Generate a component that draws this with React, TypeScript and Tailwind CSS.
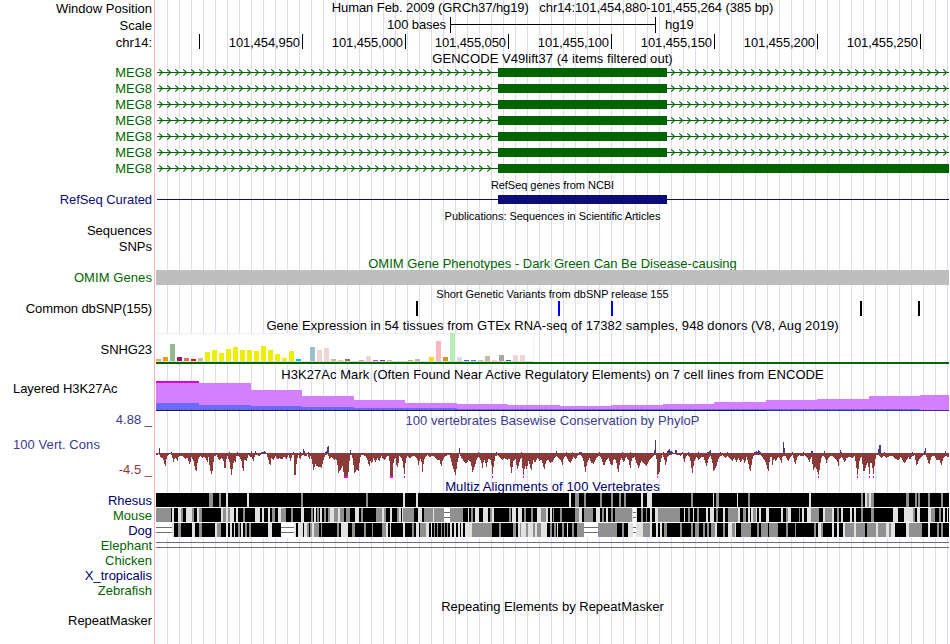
import React from "react";

/* ---------- shared row scaffolding ---------- */

const LABEL = "w-[154px] shrink-0 pr-[2px] text-right text-[13px] leading-[16px] whitespace-pre";

function Row({
  height,
  label = "",
  labelClass = "",
  children,
}: {
  height: string;
  label?: React.ReactNode;
  labelClass?: string;
  children?: React.ReactNode;
}) {
  return (
    <div className={`flex w-full shrink-0 ${height}`}>
      <div className={`${LABEL} ${labelClass}`}>{label}</div>
      <div className="ml-[2px] w-[793px] shrink-0">{children}</div>
    </div>
  );
}

function Title({
  height,
  className = "",
  small = false,
  label,
  labelClass,
  children,
}: {
  height: string;
  className?: string;
  small?: boolean;
  label?: React.ReactNode;
  labelClass?: string;
  children: React.ReactNode;
}) {
  return (
    <Row height={height} label={label} labelClass={labelClass}>
      <div
        className={`text-center leading-[16px] whitespace-pre ${small ? "text-[11px]" : "text-[13px]"} ${className}`}
      >
        {children}
      </div>
    </Row>
  );
}

/* Drawing surface for a track: x units are window pixels, starting at 156. */
function Canvas({ h, children }: { h: number; children: React.ReactNode }) {
  return (
    <svg
      className="block"
      width={793}
      height={h}
      viewBox={`156 0 793 ${h}`}
      shapeRendering="crispEdges"
    >
      {children}
    </svg>
  );
}

/* ---------- gene models ---------- */

const chevrons = Array.from({ length: 99 }, (_, i) => 162 + i * 8);

function GeneModel({ long = false }: { long?: boolean }) {
  const end = long ? 949 : 667;
  return (
    <Canvas h={16}>
      <rect x={157} y={8} width={792} height={1} fill="#006400" />
      <g stroke="#006400" strokeWidth={1.1} fill="none" shapeRendering="auto">
        {chevrons
          .filter((x) => x < 498 || x > end)
          .map((x) => (
            <path key={x} d={`M${x - 2.7} 5.3L${x + 0.5} 8.5L${x - 2.7} 11.7`} />
          ))}
      </g>
      <rect x={498} y={4} width={end - 498} height={9} fill="#006400" />
    </Canvas>
  );
}

/* ---------- GTEx expression ---------- */

const Y = "#eeee00";
const gtex: [number, string][] = [
  [2, "#ffa54f"], [4, "#ee9a00"], [17, "#8fbc8f"], [4, "#8b1c62"], [3, "#ee6a50"], [2, "#ff0000"],
  [3, "#cdb79e"], [9, Y], [11, Y], [8, Y], [12, Y], [14, Y], [11, Y], [11, Y], [10, Y], [15, Y],
  [11, Y], [7, Y], [3, Y], [10, Y], [2, "#00cdcd"], [0, "#ee82ee"], [14, "#9ac0cd"],
  [11, "#eed5d2"], [13, "#eed5d2"], [2, "#cdb79e"], [1, "#eec591"], [2, "#8b7355"],
  [0, "#8b7355"], [1, "#cdaa7d"], [5, "#eed5d2"], [1, "#b452cd"], [1, "#7a378b"],
  [1, "#cdb79e"], [0, "#cdb79e"], [0, "#cdb79e"], [1, "#9acd32"], [2, "#cdb79e"],
  [0, "#7a67ee"], [4, "#ffd700"], [20, "#ffb6c1"], [4, "#cd9b1d"], [28, "#b4eeb4"],
  [4, "#d9d9d9"], [1, "#3a5fcd"], [1, "#1e90ff"], [1, "#cdb79e"], [5, "#cdb79e"],
  [1, "#ffd39b"], [6, "#a6a6a6"], [1, "#008b45"], [6, "#eed5d2"], [6, "#eed5d2"], [0, "#ff00ff"],
];

function Gtex() {
  return (
    <Canvas h={31}>
      <rect x={156} y={0} width={378} height={29} fill="#f0f0f0" />
      <rect x={156} y={1} width={377} height={27} fill="#ffffff" />
      <rect x={156} y={28} width={377} height={1} fill="#dcdcdc" />
      {gtex.map(([h, c], i) => (
        <rect key={i} x={156 + i * 7} y={28 - h} width={5} height={h} fill={c} />
      ))}
      <rect x={156} y={29} width={793} height={2} fill="#006400" />
    </Canvas>
  );
}

/* ---------- layered H3K27Ac: [start, purple top, blue top] ---------- */

const h3k: [number, number, number][] = [
  [156, 2, 22], [199, 2, 24], [251, 9, 25], [302, 15, 26], [354, 19, 27], [405, 22, 27],
  [457, 23, 28], [508, 24, 28], [560, 25, 28], [611, 24, 28], [663, 23, 28], [714, 21, 28],
  [766, 19, 28], [817, 18, 28], [869, 15, 28], [920, 14, 29],
];

function Layered() {
  return (
    <Canvas h={30}>
      <rect x={156} y={0} width={43} height={2} fill="#d900d9" />
      {h3k.map(([x, p, b], i) => {
        const w = (h3k[i + 1]?.[0] ?? 949) - x;
        return (
          <g key={x}>
            <rect x={x} y={p} width={w} height={b - p} fill="#d37fff" />
            <rect x={x} y={b} width={w} height={29 - b} fill="#6a6aff" />
          </g>
        );
      })}
      <rect x={156} y={29} width={611} height={1} fill="#1c1648" />
      <rect x={767} y={29} width={182} height={1} fill="#3030a0" />
    </Canvas>
  );
}

/* ---------- PhyloP wiggle: "x,y" knots in thirds of a pixel, per 200px tile ---------- */

const TILES = [150, 350, 550, 750];

const negative = [
  "18,72 21,77 24,72 27,72 33,84 39,82 42,95 46,111 50,84 54,75 60,72 66,76 70,98 74,85 78,82 82,94 86,80 90,78 98,79 106,86 112,82 116,93 120,105 124,80 130,90 134,112 139,126 143,95 147,84 151,76 158,84 162,78 168,86 172,98 176,78 180,120 186,137 190,100 192,78 200,76 208,92 214,84 220,90 225,126 229,90 232,76 237,92 240,102 244,138 248,115 252,90 256,98 260,76 268,80 274,90 280,129 284,86 290,92 296,75 303,83 306,80 310,96 314,78 320,74 328,78 334,73 350,73 356,90 361,111 364,82 370,90 376,78 382,88 388,84 396,88 402,78 410,86 416,75 422,95 426,75 431,76 432,135 438,135 440,90 446,75 450,90 454,78 460,74 468,80 472,72 478,88 482,78 487,98 491,122 496,100 500,108 506,110 515,113 520,90 526,76 534,72 538,87 544,80 552,90 558,85 562,100 565,130 572,118 578,108 582,137 594,137 597,112 600,74",
  "0,74 6,76 10,100 14,132 20,118 26,125 30,85 34,74 40,75 48,80 54,95 58,110 62,90 66,102 70,82 76,98 82,84 88,95 94,78 102,90 108,84 114,76 118,80 120,137 128,137 131,90 136,82 140,108 144,112 148,78 156,85 160,110 163,137 167,92 172,78 180,84 188,76 196,80 202,86 206,108 210,84 214,90 217,130 221,98 225,82 232,76 240,82 246,76 256,82 262,90 268,88 274,110 278,92 284,80 292,76 300,76 304,95 308,110 312,122 317,135 322,98 328,72 334,82 342,95 350,100 356,90 362,95 368,129 374,110 380,88 386,80 392,90 398,115 402,84 410,112 414,88 420,85 424,100 427,137 431,108 436,78 444,76 456,90 464,84 472,90 478,84 484,132 490,95 496,84 502,120 508,98 514,80 520,137 526,105 530,120 536,92 544,122 550,90 556,98 564,82 568,95 574,88 583,119 588,95 594,88 600,100",
  "0,100 8,95 14,82 20,78 28,85 33,90 37,107 41,84 48,78 54,90 62,98 70,82 78,88 84,76 92,74 100,90 106,128 111,98 118,84 124,98 130,102 136,90 142,80 148,76 154,84 162,108 168,90 176,84 182,102 187,108 192,84 198,90 205,131 210,92 214,84 222,98 228,80 236,90 241,117 246,84 254,82 262,105 266,115 274,92 282,100 290,108 298,90 306,84 312,74 319,76 322,137 328,130 332,90 338,74 344,90 347,108 352,82 358,74 372,73 384,74 392,78 398,73 403,98 408,78 414,74 420,84 427,131 432,96 440,80 446,92 452,82 460,80 466,98 470,109 476,84 482,78 487,95 490,124 498,112 504,90 510,78 518,76 526,84 532,78 540,84 548,95 552,80 560,96 566,84 572,98 578,85 584,100 590,80 596,105 600,122",
  "0,133 4,108 8,84 12,76 24,74 34,76 42,88 48,98 55,126 60,84 64,76 67,106 72,84 78,95 84,80 90,84 94,102 98,78 106,76 114,95 120,84 128,74 136,104 142,80 148,76 156,80 164,74 172,82 179,98 184,76 190,122 196,110 202,123 206,137 210,110 214,84 220,76 226,84 229,101 234,84 240,80 246,76 254,84 262,92 265,111 269,84 276,80 284,98 290,84 298,80 306,84 314,78 319,110 323,137 328,95 334,78 341,128 348,110 354,95 358,137 362,95 366,100 370,137 374,105 378,74 386,76 394,84 402,78 410,84 418,78 428,78 436,86 446,90 452,80 458,90 464,101 470,90 476,80 480,90 486,78 494,76 500,108 506,90 512,84 518,76 528,76 534,95 538,104 544,80 552,76 560,90 568,90 574,107 580,84 588,76 594,84 597,80",
];

const positive = [
  "27,54 65,66 238,66 262,66 303,63 315,63 334,66 337,66 340,66 343,63 346,66 431,66 452,66 460,57 463,63 476,66 525,66 528,63 531,51 534,48",
  "1,60 328,54 385,66 439,66 515,66",
  "19,63 49,66 67,66 88,66 91,66 94,66 148,66 217,66 242,66 312,60 315,30 340,66 352,63 355,60 358,57 361,63 364,63 367,66 376,60 379,60 398,66 414,66 445,66 473,66 476,66 479,63 482,60 511,66 531,66",
  "12,66 15,66 18,63 21,66 24,60 27,63 30,66 99,36 102,54 126,66 160,66 184,63 187,63 223,63 271,60 274,66 385,57 388,45 391,45 403,66 487,66 523,63 526,54 586,63",
];

const clipped = [[344, 4], [390, 3], [404, 1], [492, 1], [523, 1], [657, 1], [818, 1], [857, 1], [869, 1], [873, 1]];

const knots = (s: string) => s.split(" ").map((p) => p.split(",").map(Number));

function negativePath() {
  let d = "";
  TILES.forEach((x0, t) => {
    const pts = knots(negative[t]);
    let k = 0;
    for (let x = t === 0 ? 156 : x0; x < Math.min(x0 + 200, 949); x++) {
      const z = (x - x0) * 3 + 1.5;
      while (k < pts.length - 2 && pts[k + 1][0] < z) k++;
      const [ax, ay] = pts[k];
      const [bx, by] = pts[k + 1];
      const f = Math.max(0, Math.min(1, (z - ax) / (bx - ax)));
      const depth = Math.round((ay + (by - ay) * f - 72) / 3);
      d += `M${x} 25h1v${depth + 1}h-1z`;
    }
  });
  return d;
}

function positivePath() {
  let d = "";
  TILES.forEach((x0, t) => {
    knots(positive[t]).forEach(([x, y]) => {
      const top = Math.round(y / 3) + 2;
      d += `M${x0 + Math.floor(x / 3)} ${top}h1V25h-1z`;
    });
  });
  return d;
}

function Wiggle() {
  return (
    <Canvas h={51}>
      <path d={negativePath()} fill="#8b3a3a" />
      <path d={positivePath()} fill="#3c3c8c" />
      {clipped.map(([x, w]) => (
        <rect key={x} x={x} y={48} width={w} height={2} fill="#ff00ff" />
      ))}
    </Canvas>
  );
}

/* ---------- Multiz alignments: run starts in thirds of a pixel, per tile ----------
   b = aligned, g = partial, l = weak, w = unaligned (double line) */

const rhesus = [
  "b18 g177 b189 g207 b213 l228 b234 l291 b297 g453 b459",
  "b0 g48 b54 l159 b165 l198 b204",
  "b0 l57 b63 g75 b87 g102 b108 g150 b156 g183 b189 g207 b213 g222 b228 l273 b279 l291 b306 g423 b429 l489 b492 g498 b507 l561 b564 g594",
  "b0 l177 b183 g333 b339 l345 g351 l357 g363 b372 g468 b477 g495 b501 g504 b510 g534 b540 g573 b579",
];
const mouse = [
  "g18 b63 l66 b72 l84 g93 b99 l108 g126 b132 l141 g147 b156 l213 g219 l228 g234 l240 b252 l258 b264 g279 b285 l315 b330 l336 b342 l354 b360 g366 b375 l384 g393 b408 g423 b429 l453 b462 g483 b489 l492 b498 g501 b507 l510 b516 g522 b528 g534 l540 g552 l564 g570 b582 g588",
  "b0 l15 b27 g33 b39 g78 l96 g102 b108 l120 b126 g141 l147 b153 l156 g159 b192 l204 b216 g222 l249 g252 w282 g300 b339 l354 b357 g363 b369 l375 b387 l399 b414 g420 l426 b432 g477 b483 l486 b498 l504 b516 g522 b528 g543 b549 l561 g573 l588 b594",
  "l0 b6 g9 b12 g30 b36 g75 l87 b96 g102 b129 l138 b150 g156 b162 l168 b174 g183 b189 g195 l246 w249 l258 b261 g273 b279 g288 b291 l300 b306 l315 g324 b390 l402 b405 g414 b420 l429 b432 g441 b447 l468 b474 l480 b492 g498 b504 l519 b525 g534 l564 b570 g579 b588 l594",
  "b0 l3 g9 l18 b21 l27 b33 l48 b57 l93 b99 g108 l114 b123 g147 b150 l156 b162 l171 g183 b207 l219 g225 l246 b252 g261 b267 l273 b279 l300 b306 l312 b318 g333 b339 g363 b372 l429 b444 l462 g489 b495 l501 b510 l534 g543 b555 g567 b573 l579 b585 l591 b594",
];
const dog = [
  "w18 l66 b72 g84 b93 l126 b135 g147 b156 l195 g201 b213 l228 b234 l240 b246 l252 b255 g264 b270 l273 b279 g285 b291 g297 b303 l354 b366 w393 l432 b438 l444 b459 l462 g471 b477 g480 l486 g492 b507 g513 b516 g561 b567 l573 b594",
  "b0 g6 b15 g42 b48 g66 b69 g96 l108 b114 l120 b123 l159 b165 g186 b192 l198 b207 g210 l228 b237 l243 b246 g252 b255 g261 b264 g273 b276 g282 b285 g291 b294 l300 b306 l312 b318 l324 b330 l333 b339 l345 g366 b426 g447 b453 g489 b498 l504 g510 l513 g528 l534 g549 l555 g561 l573 b591",
  "g0 b6 g12 b18 l21 b24 g36 b42 l51 b54 g66 b72 g81 w102 g144 b201 g216 b222 l234 w249 l258 g279 l300 b306 l318 b324 l330 b336 g342 b351 g390 b396 g423 b429 g435 b447 g459 b465 g471 b477 g483 l495 b501 g519 b525 l534 g546 l555 b558 g573",
  "g0 b3 g21 b27 g33 b54 g57 b84 g108 b114 g135 b138 g192 b198 l204 g213 b219 l246 b252 l261 b267 l279 g285 l312 g318 b345 g351 l378 g384 l408 g417 l423 b435 l468 g477 b516 l534 b540 g561 b567 g573 b579",
];

const SHADE: Record<string, string> = { b: "#000000", g: "#909090", l: "#e1e1e1" };

function Alignment({ tiles }: { tiles: string[] }) {
  const runs = tiles.flatMap((s, t) =>
    s.split(" ").map((r) => ({ kind: r[0], x: TILES[t] + Number(r.slice(1)) / 3 })),
  );
  return (
    <Canvas h={15}>
      {runs.map(({ kind, x }, i) => {
        const w = (runs[i + 1]?.x ?? 949) - x;
        return kind === "w" ? (
          <g key={i}>
            <rect x={x} y={0} width={w} height={14} fill="#ffffff" />
            <rect x={x} y={4} width={w} height={1} fill="#6e6e6e" />
            <rect x={x} y={9} width={w} height={1} fill="#6e6e6e" />
          </g>
        ) : (
          <rect key={i} x={x} y={0} width={w} height={14} fill={SHADE[kind]} />
        );
      })}
      <rect x={156} y={14} width={793} height={1} fill="#ffffff" />
    </Canvas>
  );
}

const snps: [number, string][] = [
  [416, "#000000"], [558, "#0000ff"], [611, "#0000ff"], [860, "#000000"], [918, "#000000"],
];

const ticks = [
  "101,454,950", "101,455,000", "101,455,050", "101,455,100", "101,455,150", "101,455,200", "101,455,250",
];

const GREEN = "text-[#006400]";
const NAVY = "text-[#0c0c78]";

export default function App() {
  return (
    <div className="flex h-[644px] w-[950px] overflow-hidden bg-white bg-[linear-gradient(#ffb4b4,#ffb4b4)] bg-[length:1px_100%] bg-[position:154px_0] bg-no-repeat font-['Liberation_Sans',Arial,sans-serif] text-black">
      <div className="flex h-full w-[949px] flex-col bg-[repeating-linear-gradient(to_right,transparent_0px,transparent_11px,#dcdcf8_11px,#dcdcf8_12px)] bg-[length:793px_100%] bg-[position:156px_0] bg-no-repeat">
        <Title height="h-[17px]" className="tracking-[-0.085px]" label="Window Position" labelClass="pt-px">
          {"Human Feb. 2009 (GRCh37/hg19)   chr14:101,454,880-101,455,264 (385 bp)"}
        </Title>
        <Row height="h-[17px]" label="Scale" labelClass="pt-px">
          <div className="flex h-[16px] items-center text-[13px] leading-[16px] tracking-[-0.1px]">
            <span className="w-[290px] text-right">100 bases</span>
            <span className="ml-[4px] flex h-[16px] w-[206px] items-center border-x border-black">
              <span className="-mt-px h-px w-full bg-black" />
            </span>
            <span className="ml-[9px]">hg19</span>
          </div>
        </Row>
        <Row height="h-[17px]" label="chr14:" labelClass="pt-px">
          <div className="flex h-[15px] text-[13px] leading-[16px] tracking-[-0.1px]">
            <span className="h-[15px] w-[44px] border-r border-black" />
            {ticks.map((t) => (
              <span key={t} className="h-[15px] w-[103px] border-r border-black pt-px pr-[2px] text-right">
                {t}
              </span>
            ))}
          </div>
        </Row>

        <Title height="h-[13px]" className="tracking-[0.05px]">GENCODE V49lift37 (4 items filtered out)</Title>
        {[0, 1, 2, 3, 4, 5, 6].map((i) => (
          <Row key={i} height="h-[16px]" label="MEG8" labelClass="pt-px text-[#006400]">
            <GeneModel long={i === 6} />
          </Row>
        ))}

        <Title height="h-[15px]" small className="pt-px tracking-[-0.04px]">RefSeq genes from NCBI</Title>
        <Row height="h-[16px]" label="RefSeq Curated" labelClass={`pt-px tracking-[-0.07px] ${NAVY}`}>
          <Canvas h={16}>
            <rect x={157} y={8} width={792} height={1} fill="#0c0c78" />
            <rect x={498} y={4} width={169} height={9} fill="#0c0c78" />
          </Canvas>
        </Row>

        <Title height="h-[16px]" small className="pt-px tracking-[-0.04px]">
          Publications: Sequences in Scientific Articles
        </Title>
        <Row height="h-[16px]" label="Sequences" />
        <Row height="h-[16px]" label="SNPs" />

        <Title height="h-[15px]" className={`pt-px ${GREEN}`}>
          OMIM Gene Phenotypes - Dark Green Can Be Disease-causing
        </Title>
        <Row height="h-[15px]" label="OMIM Genes" labelClass={`tracking-[0.08px] ${GREEN}`}>
          <div className="h-[15px] bg-[#bebebe]" />
        </Row>

        <Title height="h-[16px]" small className="pt-px tracking-[-0.02px]">
          Short Genetic Variants from dbSNP release 155
        </Title>
        <Row height="h-[15px]" label="Common dbSNP(155)" labelClass="tracking-[-0.1px]">
          <Canvas h={15}>
            {snps.map(([x, c]) => (
              <rect key={x} x={x} y={0} width={2} height={15} fill={c} />
            ))}
          </Canvas>
        </Row>

        <Title height="h-[17px]" className="pt-[2px] tracking-[0.055px]">
          Gene Expression in 54 tissues from GTEx RNA-seq of 17382 samples, 948 donors (V8, Aug 2019)
        </Title>
        <Row height="h-[31px]" label="SNHG23" labelClass="pt-[9px] tracking-[-0.1px]">
          <Gtex />
        </Row>

        <Title height="h-[17px]" className="pt-[3px] tracking-[0.058px]">
          H3K27Ac Mark (Often Found Near Active Regulatory Elements) on 7 cell lines from ENCODE
        </Title>
        <Row
          height="h-[30px]"
          label={<div className="pl-[13px] text-left tracking-[-0.07px]">Layered H3K27Ac</div>}
        >
          <Layered />
        </Row>

        <Title
          height="h-[17px]"
          className="pt-[2px] tracking-[0.045px] text-[#3c3c8c]"
          label="4.88 _"
          labelClass="pt-px text-[#3c3c8c]"
        >
          100 vertebrates Basewise Conservation by PhyloP
        </Title>
        <Row
          height="h-[51px]"
          label={
            <div className="flex flex-col pt-[9px]">
              <span className="pl-[13px] text-left tracking-[0.07px] text-[#3c3c8c]">100 Vert. Cons</span>
              <span className="pt-[9px] text-[#8b3a3a]">-4.5 _</span>
            </div>
          }
        >
          <Wiggle />
        </Row>

        <Title height="h-[14px]" className="tracking-[0.1px] text-[#000064]">
          Multiz Alignments of 100 Vertebrates
        </Title>
        <Row height="h-[15px]" label="Rhesus" labelClass="text-[#000064]">
          <Alignment tiles={rhesus} />
        </Row>
        <Row height="h-[15px]" label="Mouse" labelClass={GREEN}>
          <Alignment tiles={mouse} />
        </Row>
        <Row height="h-[15px]" label="Dog" labelClass="text-[#000064]">
          <Alignment tiles={dog} />
        </Row>
        <Row height="h-[15px]" label="Elephant" labelClass={GREEN}>
          <div className="flex flex-col gap-[4px] pt-[4px]">
            <div className="h-px bg-[#6e6e6e]" />
            <div className="h-px bg-[#6e6e6e]" />
          </div>
        </Row>
        <Row height="h-[15px]" label="Chicken" labelClass={GREEN} />
        <Row height="h-[15px]" label="X_tropicalis" labelClass="text-[#000064]" />
        <Row height="h-[15px]" label="Zebrafish" labelClass={GREEN} />

        <Title height="h-[15px]" className="pt-px">Repeating Elements by RepeatMasker</Title>
        <Row height="h-[16px]" label="RepeatMasker" labelClass="tracking-[-0.05px]" />
      </div>
    </div>
  );
}
